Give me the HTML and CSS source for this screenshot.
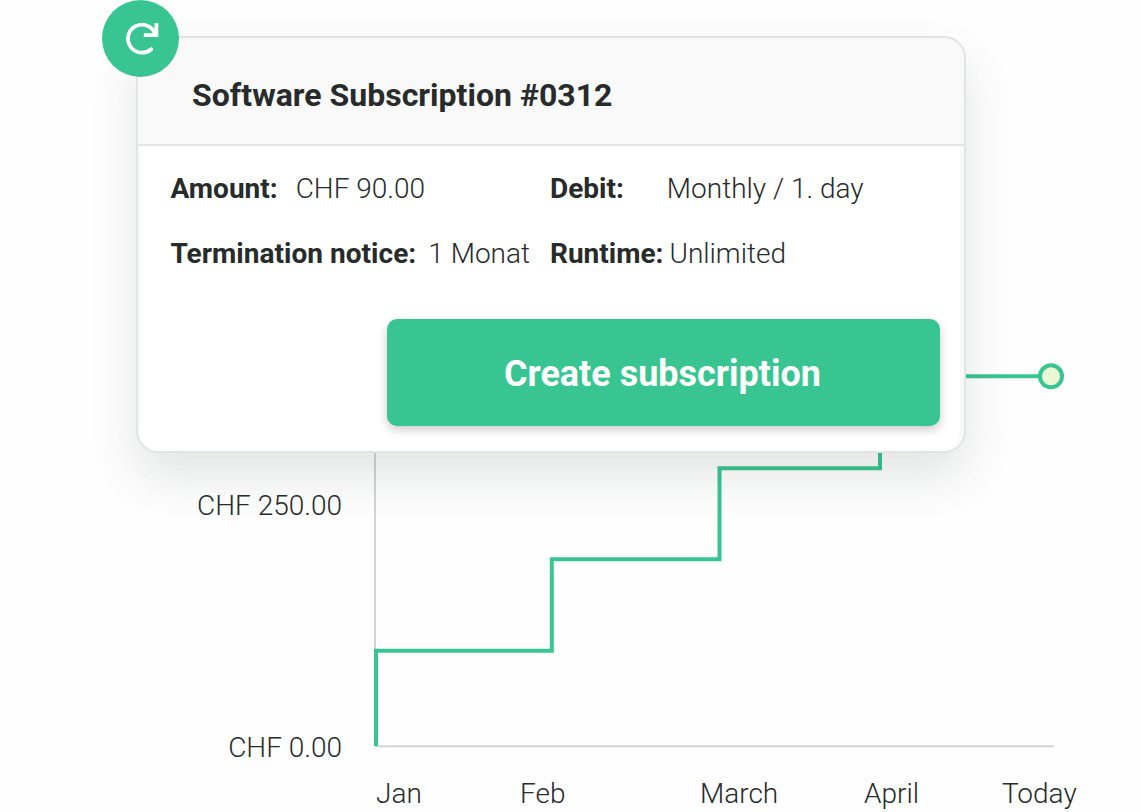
FILE: index.html
```html
<!DOCTYPE html>
<html lang="en">
<head>
    <meta charset="UTF-8">
    <meta name="viewport" content="width=device-width, initial-scale=1.0">
    <title>Software Subscription</title>
    <link rel="stylesheet" href="styles.css">
</head>
<body>
    <div class="scene">
        <div class="chart">
            <div class="y-labels">
                <span>CHF 250.00</span>
                <span>CHF 0.00</span>
            </div>
            <svg class="plot" width="692" height="750" viewBox="0 0 692 750">
                <path class="axis" d="M1 380V746"/>
                <path class="axis" d="M1 746.2H680"/>
                <path class="line" d="M2 746V650.8H177.8V559.2H345.5V468.2H506V376.3H665"/>
                <circle class="point" cx="677" cy="376.3" r="11"/>
            </svg>
            <div class="x-labels">
                <span>Jan</span>
                <span>Feb</span>
                <span>March</span>
                <span>April</span>
                <span>Today</span>
            </div>
        </div>

        <div class="card">
            <div class="badge">
                <svg width="77" height="77" viewBox="0 0 77 77">
                    <path class="arc" d="M49.2 49.2A14 14 0 1 1 53.2 34"/>
                    <path class="arrow" d="M54.4 23.2V35.2H41.8"/>
                </svg>
            </div>
            <div class="card-header">
                <h1>Software Subscription #0312</h1>
            </div>
            <div class="card-body">
                <dl class="details">
                    <div class="amount"><dt>Amount:</dt><dd>CHF 90.00</dd></div>
                    <div class="debit"><dt>Debit:</dt><dd>Monthly / 1. day</dd></div>
                    <div class="notice"><dt>Termination notice:</dt><dd>1 Monat</dd></div>
                    <div class="runtime"><dt>Runtime:</dt><dd>Unlimited</dd></div>
                </dl>
                <button type="button">Create subscription</button>
            </div>
        </div>
    </div>
</body>
</html>
```
FILE: styles.css
```css
* {
    box-sizing: border-box;
}
body {
    font-family: Roboto, Arial, sans-serif;
    background-color: #fefefe;
    color: #272b2b;
    margin: 0;
}
.scene {
    position: relative;
    width: 1140px;
    height: 812px;
    overflow: hidden;
}
.chart {
    display: grid;
    grid-template-columns: 342px 692px;
    grid-template-rows: 750px 62px;
    column-gap: 32px;
    font-size: 28px;
    font-weight: 300;
    line-height: 32px;
}
.y-labels {
    display: flex;
    flex-direction: column;
    align-items: flex-end;
    gap: 210px;
    padding-top: 490px;
}
.plot {
    display: block;
}
.axis {
    fill: none;
    stroke: #d3d4d4;
    stroke-width: 2;
}
.line {
    fill: none;
    stroke: #39c592;
    stroke-width: 4;
}
.point {
    fill: #eaf8d5;
    stroke: #39c592;
    stroke-width: 4;
}
.x-labels {
    grid-column: 2;
    display: grid;
    grid-template-columns: 144px 180px 164px 138px auto;
    padding: 28px 0 0 2px;
}
.card {
    position: absolute;
    left: 136px;
    top: 36px;
    width: 830px;
    height: 417px;
    border: 2px solid #e3e5e5;
    border-radius: 22px;
    background: #f9f9f9;
    box-shadow: 0 24px 48px rgba(30, 50, 45, 0.12);
}
.badge {
    position: absolute;
    left: -36.5px;
    top: -38px;
    width: 77px;
    height: 77px;
    border-radius: 50%;
    background: #39c592;
}
.badge svg {
    display: block;
    fill: none;
    stroke: #fff;
    stroke-width: 3.8;
}
.arc {
    stroke-linecap: round;
}
.card-header {
    height: 108px;
    padding: 38px 54px 0;
    border-bottom: 2px solid #e3e5e5;
}
h1 {
    margin: 0;
    font-size: 32px;
    line-height: 38px;
    font-weight: 700;
    letter-spacing: 0.02px;
}
.card-body {
    display: flex;
    flex-direction: column;
    height: 305px;
    margin: 0 4px 0 2px;
    padding: 27px 20px 0 30.5px;
    border-radius: 0 0 20px 20px;
    background: #fff;
}
.details {
    display: grid;
    grid-template-columns: 379.5px auto;
    row-gap: 33px;
    margin: 0;
    font-size: 28px;
    line-height: 32px;
}
.details div {
    display: flex;
    white-space: nowrap;
}
dt {
    font-weight: 700;
}
dd {
    margin: 0;
    font-weight: 300;
}
.amount {
    gap: 18px;
}
.debit {
    gap: 43px;
}
.notice {
    gap: 12px;
    letter-spacing: 0.03px;
}
.runtime {
    gap: 6px;
}
button {
    align-self: flex-end;
    width: 553px;
    height: 107px;
    margin-top: 49px;
    padding: 2px 2px 0 0;
    border: none;
    border-radius: 10px;
    background: #39c592;
    color: #fff;
    font-family: inherit;
    font-size: 36px;
    font-weight: 700;
    box-shadow: 0 4px 10px rgba(0, 0, 0, 0.2);
}
```
